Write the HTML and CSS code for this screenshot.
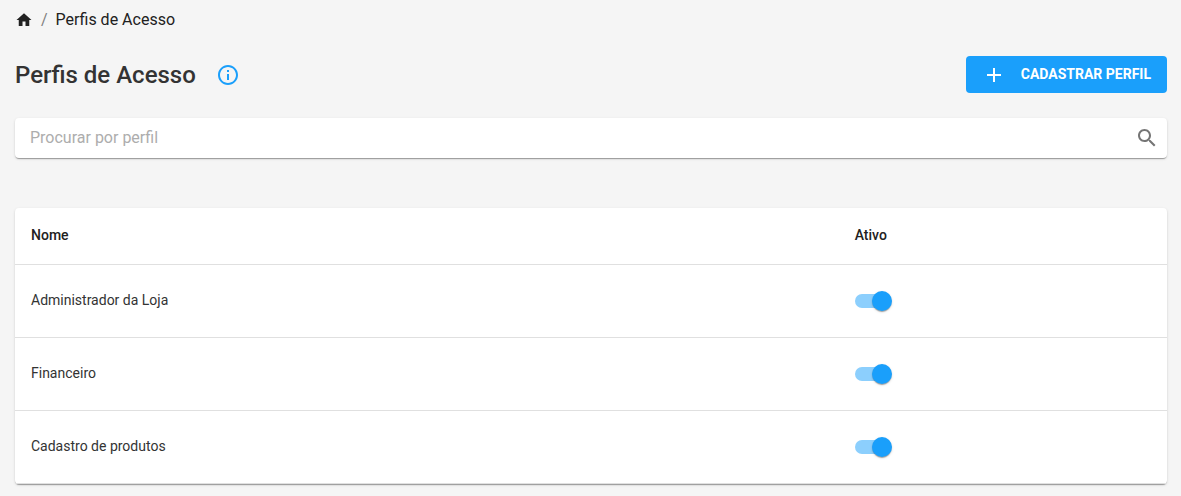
FILE: index.html
```html
<!DOCTYPE html>
<html lang="pt-BR">
<head>
  <meta charset="UTF-8">
  <meta name="viewport" content="width=device-width, initial-scale=1">
  <title>Perfis de Acesso</title>
  <link rel="stylesheet" href="styles.css">
</head>
<body>
  <nav class="breadcrumb" aria-label="Navegação">
    <a href="#" aria-label="Início"><svg class="icon-home" viewBox="0 0 24 24"><path d="M10 20v-6h4v6h5v-8h3L12 3 2 12h3v8z"/></svg></a>
    <span class="separator">/</span>
    <a href="#">Perfis de Acesso</a>
  </nav>

  <header class="page-header">
    <h1>Perfis de Acesso</h1>
    <button type="button" class="btn-info" aria-label="Informações">
      <svg viewBox="0 0 24 24"><path d="M11 7h2v2h-2zm0 4h2v6h-2zm1-9C6.48 2 2 6.48 2 12s4.48 10 10 10 10-4.48 10-10S17.52 2 12 2zm0 18c-4.41 0-8-3.59-8-8s3.59-8 8-8 8 3.59 8 8-3.59 8-8 8z"/></svg>
    </button>
    <button type="button" class="btn-primary">
      <svg viewBox="0 0 24 24"><path d="M19 13h-6v6h-2v-6H5v-2h6V5h2v6h6v2z"/></svg>
      <span>CADASTRAR PERFIL</span>
    </button>
  </header>

  <main>
    <form class="search card" role="search">
      <input type="text" placeholder="Procurar por perfil" aria-label="Procurar por perfil">
      <button type="submit" aria-label="Procurar">
        <svg viewBox="0 0 24 24"><path d="M15.5 14h-.79l-.28-.27C15.41 12.59 16 11.11 16 9.5 16 5.91 13.09 3 9.5 3S3 5.91 3 9.5 5.91 16 9.5 16c1.61 0 3.09-.59 4.23-1.57l.27.28v.79l5 4.99L20.49 19l-4.99-5zm-6 0C7.01 14 5 11.99 5 9.5S7.01 5 9.5 5 14 7.01 14 9.5 11.99 14 9.5 14z"/></svg>
      </button>
    </form>

    <div class="card">
      <table>
        <thead>
          <tr><th class="col-name">Nome</th><th>Ativo</th></tr>
        </thead>
        <tbody>
          <tr>
            <td class="name"><label for="perfil-1">Administrador da Loja</label></td>
            <td><input type="checkbox" class="switch" id="perfil-1" checked></td>
          </tr>
          <tr>
            <td class="name"><label for="perfil-2">Financeiro</label></td>
            <td><input type="checkbox" class="switch" id="perfil-2" checked></td>
          </tr>
          <tr>
            <td class="name"><label for="perfil-3">Cadastro de produtos</label></td>
            <td><input type="checkbox" class="switch" id="perfil-3" checked></td>
          </tr>
        </tbody>
      </table>
    </div>
  </main>
</body>
</html>
```
FILE: styles.css
```css
* { box-sizing: border-box; }
body {
  margin: 0;
  padding: 8px 14px 8px 15px;
  background: #f5f5f5;
  color: #333;
  font-family: Roboto, sans-serif;
  font-size: 16px;
}
svg { display: block; fill: currentColor; }
button {
  border: none;
  padding: 0;
  background: none;
  font-family: inherit;
  cursor: pointer;
}

.breadcrumb {
  display: flex;
  align-items: center;
  gap: 8px;
  line-height: 24px;
  color: #212121;
}
.breadcrumb a { color: inherit; text-decoration: none; }
.breadcrumb .separator { color: #808080; }
.icon-home { width: 18px; height: 18px; }

.page-header {
  display: flex;
  align-items: center;
  margin: 24px 0 25px;
}
h1 {
  margin: 0;
  font-size: 24px;
  font-weight: 500;
  line-height: 32px;
}
.btn-info { margin-left: 20px; color: #1a9ffb; }
.btn-info svg { width: 24px; height: 24px; }
.btn-primary {
  display: flex;
  align-items: center;
  gap: 15px;
  height: 37px;
  margin-left: auto;
  padding: 0 16px;
  border-radius: 4px;
  background: #1a9ffb;
  color: #fff;
  font-size: 14px;
  font-weight: 700;
}
.btn-primary svg { width: 24px; height: 24px; }
.btn-primary span { padding-bottom: 2px; }

.card {
  background: #fff;
  border-radius: 4px;
  box-shadow: 0 2px 1px -1px rgba(0, 0, 0, 0.2), 0 1px 1px 0 rgba(0, 0, 0, 0.14), 0 1px 3px 0 rgba(0, 0, 0, 0.12);
}
.search {
  display: flex;
  align-items: center;
  height: 40px;
  margin-bottom: 50px;
  padding: 0 8px 0 15px;
}
.search input {
  flex: 1;
  padding: 0 0 2px;
  border: none;
  outline: none;
  background: none;
  color: #333;
  font-family: inherit;
  font-size: 16px;
}
.search input::placeholder { color: #adadad; }
.search button { color: #757575; }
.search svg { width: 24px; height: 24px; }

table {
  width: 100%;
  border-collapse: separate;
  border-spacing: 0;
  font-size: 14px;
}
th, td {
  height: 73px;
  padding: 0 16px;
  border-bottom: 1px solid #e0e0e0;
  text-align: left;
}
th {
  height: 57px;
  font-weight: 500;
  color: #212121;
}
th, td.name { padding-bottom: 2px; }
.col-name { width: 71.5%; }

.switch {
  position: relative;
  display: block;
  appearance: none;
  width: 37px;
  height: 20px;
  margin: 0;
  cursor: pointer;
}
.switch::before {
  content: "";
  position: absolute;
  top: 3px;
  left: 0;
  width: 34px;
  height: 14px;
  border-radius: 7px;
  background: #bdbdbd;
}
.switch::after {
  content: "";
  position: absolute;
  top: 0;
  left: 0;
  width: 20px;
  height: 20px;
  border-radius: 50%;
  background: #fafafa;
  box-shadow: 0 2px 1px -1px rgba(0, 0, 0, 0.2), 0 1px 1px 0 rgba(0, 0, 0, 0.14), 0 1px 3px 0 rgba(0, 0, 0, 0.12);
}
.switch:checked::before { background: #8ccffd; }
.switch:checked::after { left: 17px; background: #1a9ffb; }
```
